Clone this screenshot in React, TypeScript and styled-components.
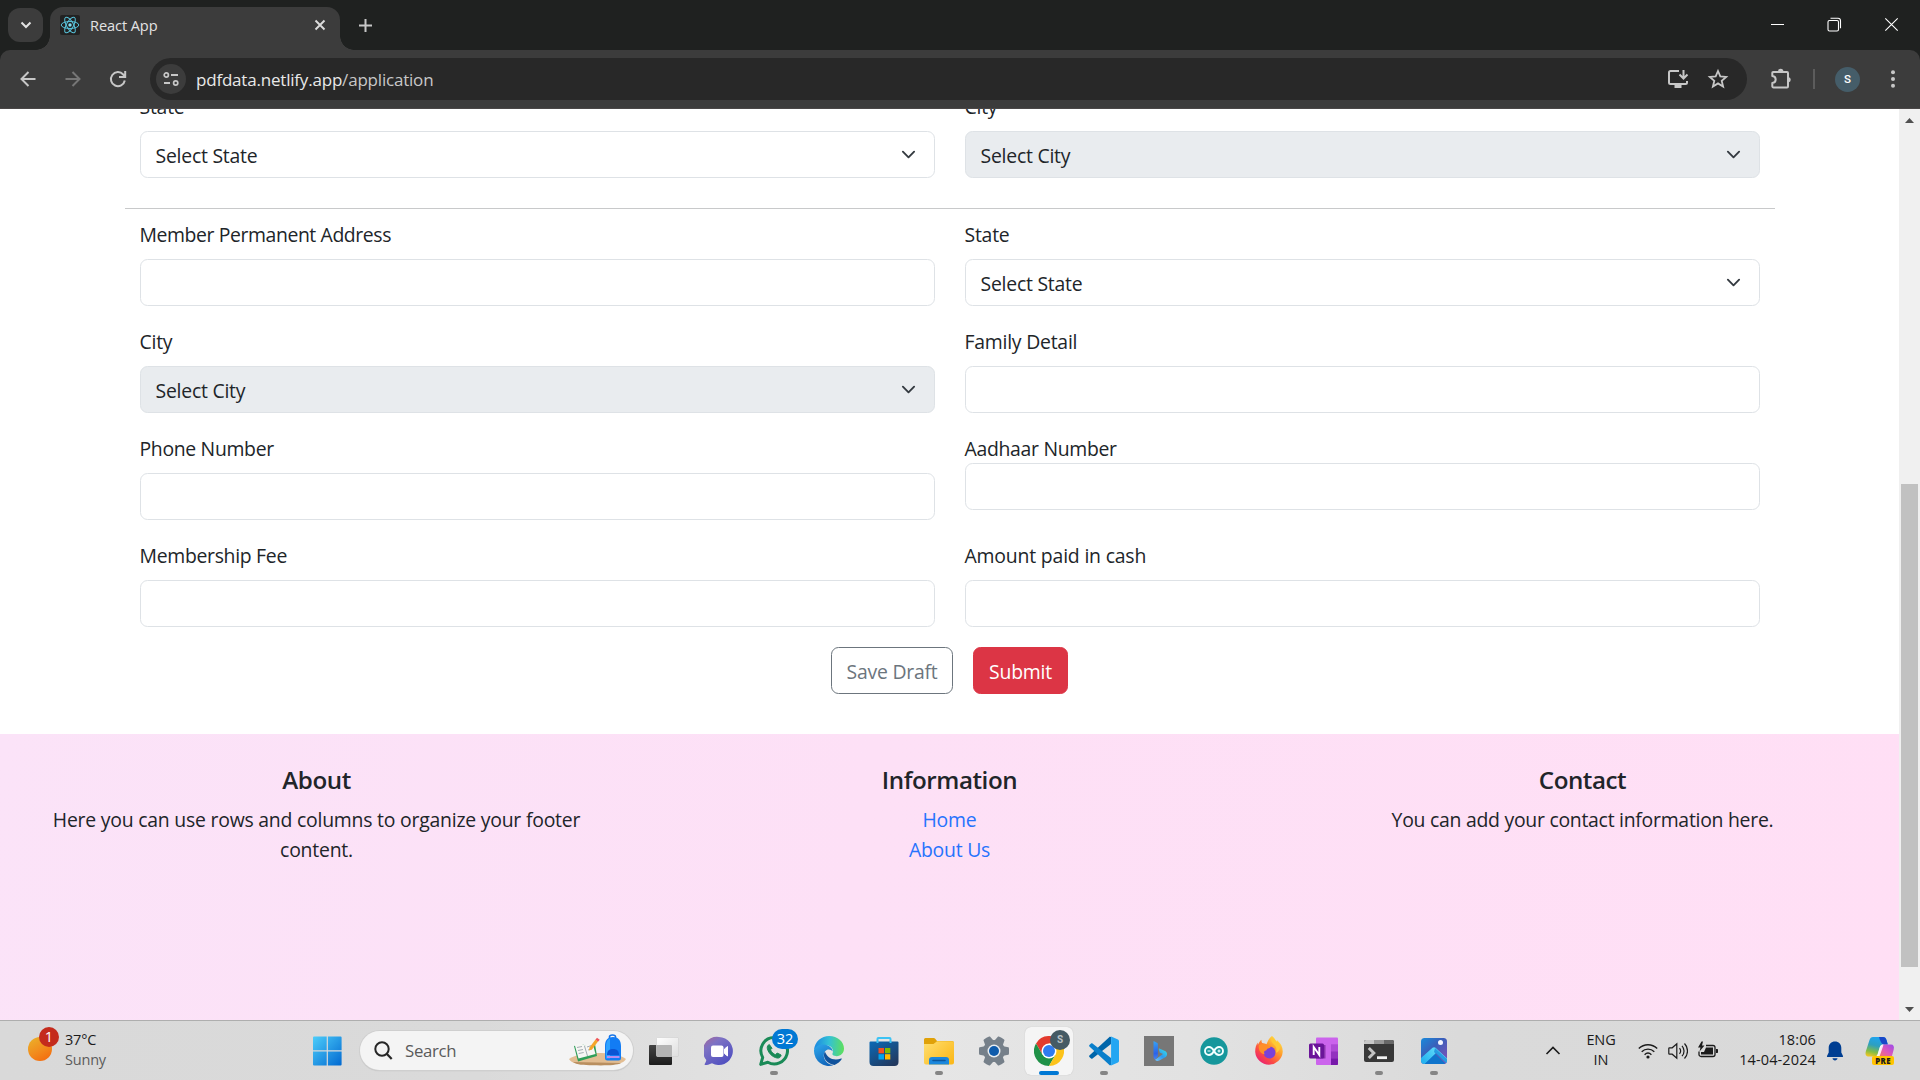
import React from 'react';
import styled, { createGlobalStyle, css } from 'styled-components';

const GlobalStyle = createGlobalStyle`
  *, *::before, *::after { box-sizing: border-box; }
  body { margin: 0; background: #fff; overflow: hidden; }
  #root { font-family: "Open Sans", "Noto Sans", sans-serif; color: #212529; }
`;

const Screen = styled.div`
  width: 1920px;
  height: 1080px;
  display: flex;
  flex-direction: column;
  overflow: hidden;
`;

/* ---------- browser chrome ---------- */

const TabStrip = styled.header`
  height: 50px;
  flex: none;
  display: flex;
  align-items: flex-start;
  background: #1f2120;
  padding-left: 8px;
`;

const TabSearch = styled.button`
  width: 35px;
  height: 34px;
  margin: 8px 7px 0 0;
  padding: 0;
  border: 0;
  border-radius: 12px;
  background: #3c3c3c;
  display: flex;
  align-items: center;
  justify-content: center;
  position: relative;
  z-index: 1;
`;

const Tab = styled.div`
  position: relative;
  width: 290px;
  height: 43px;
  margin-top: 7px;
  padding: 0 12px 7px 10px;
  border-radius: 13px 13px 0 0;
  background: #3c3c3c;
  display: flex;
  align-items: center;
  &::before, &::after {
    content: "";
    position: absolute;
    bottom: 0;
    width: 14px;
    height: 14px;
  }
  &::before {
    left: -14px;
    background: radial-gradient(circle at 0 0, transparent 13.5px, #3c3c3c 14px);
  }
  &::after {
    right: -14px;
    background: radial-gradient(circle at 100% 0, transparent 13.5px, #3c3c3c 14px);
  }
`;

const Favicon = styled.span`
  width: 20px;
  height: 20px;
  border-radius: 2px;
  background: #222;
  display: flex;
`;

const TabTitle = styled.span`
  flex: 1;
  padding-left: 10px;
  font-size: 14.6px;
  line-height: 20px;
  letter-spacing: -0.1px;
  color: #e3e3e3;
`;

const GlyphButton = styled.span<{ $w: number; $shift?: number }>`
  width: ${(p) => p.$w}px;
  height: 100%;
  flex: none;
  padding-left: ${(p) => p.$shift ?? 0}px;
  display: flex;
  align-items: center;
  justify-content: center;
`;

const NewTab = styled.span`
  width: 51px;
  height: 50px;
  display: flex;
  align-items: center;
  justify-content: center;
`;

const WindowControls = styled.div`
  height: 49px;
  margin-left: auto;
  display: flex;
`;

const ToolbarBack = styled.div`
  flex: none;
  height: 59px;
  background: #1f2120;
`;

const Toolbar = styled.div`
  height: 59px;
  border-radius: 10px 10px 0 0;
  border-bottom: 1px solid #4a4747;
  background: #3c3c3c;
  display: flex;
  align-items: center;
  padding-left: 5px;
`;

const Omnibox = styled.div`
  flex: none;
  width: 1597px;
  height: 42px;
  margin-left: 10px;
  border-radius: 21px;
  background: #282828;
  display: flex;
  align-items: center;
  padding: 0 9px 0 6px;
`;

const SiteInfo = styled.span`
  width: 30px;
  height: 30px;
  border-radius: 50%;
  background: #3c3c3c;
  display: flex;
  align-items: center;
  justify-content: center;
`;

const Address = styled.span`
  flex: 1;
  padding: 1px 0 0 10px;
  font-size: 17px;
  letter-spacing: -0.2px;
  line-height: 24px;
  color: #e8e8e8;
`;

const AddressPath = styled.span`
  color: #c7c7c7;
`;

const Divider = styled.span`
  flex: none;
  width: 2px;
  height: 20px;
  background: #5c5c5c;
  margin-right: 20px;
`;

const Avatar = styled.span`
  flex: none;
  width: 25px;
  height: 25px;
  border-radius: 50%;
  background: #455d69;
  color: #fff;
  font: 500 11.5px/25px Roboto, sans-serif;
  text-align: center;
`;

/* ---------- page ---------- */

const Viewport = styled.div`
  height: 911px;
  flex: none;
  display: flex;
  overflow: hidden;
`;

const Page = styled.main`
  flex: 1;
  overflow: hidden;
  display: flex;
  flex-direction: column;
`;

const bodyText = css`
  font-size: 19.4px;
  line-height: 30px;
  letter-spacing: -0.23px;
`;

const Form = styled.div`
  width: 1650px;
  margin: -18px auto 0;
  ${bodyText}
`;

const Row = styled.div`
  display: grid;
  grid-template-columns: 1fr 1fr;
  column-gap: 30px;
  padding: 0 15px;
`;

const Field = styled.div<{ $tight?: boolean }>`
  height: 107px;
  display: flex;
  flex-direction: column;
  gap: ${(p) => (p.$tight ? 0 : 10)}px;
`;

const Label = styled.label<{ $track?: number }>`
  height: 30px;
  padding-top: 1px;
  letter-spacing: ${(p) => p.$track ?? -0.23}px;
`;

const control = css`
  width: 100%;
  height: 47px;
  flex: none;
  border: 1px solid #dee2e6;
  border-radius: 7.5px;
`;

const Input = styled.input`
  ${control}
  background: #fff;
  padding: 0 15px;
  outline: none;
`;

const Select = styled.div<{ $disabled?: boolean }>`
  ${control}
  background: ${(p) => (p.$disabled ? '#e9ecef' : '#fff')};
  padding: 2px 18px 0 15px;
  display: flex;
  align-items: center;
  justify-content: space-between;
  & > svg { margin-top: -2px; }
`;

const Rule = styled.hr`
  height: 1px;
  margin: 10px 0;
  border: 0;
  background: #c8c9ca;
`;

const Actions = styled.div`
  display: flex;
  justify-content: center;
  gap: 20px;
  padding-bottom: 40px;
`;

const Button = styled.button<{ $solid?: boolean }>`
  width: ${(p) => (p.$solid ? 95 : 122)}px;
  height: 47px;
  padding: 2px 0 0;
  border: 1px solid ${(p) => (p.$solid ? '#dc3545' : '#6c757d')};
  border-radius: 7.5px;
  background: ${(p) => (p.$solid ? '#dc3545' : '#fff')};
  color: ${(p) => (p.$solid ? '#fff' : '#6c757d')};
  font-family: inherit;
  font-weight: ${(p) => (p.$solid ? 500 : 400)};
  ${bodyText}
`;

const Footer = styled.footer`
  flex: 1;
  background: linear-gradient(100deg, #fbe3f8 0%, #fde0f6 45%, #ffdff5 100%);
  display: grid;
  grid-template-columns: repeat(3, 1fr);
  padding-top: 31px;
  text-align: center;
`;

const FooterColumn = styled.section`
  padding: 0 50px;
  ${bodyText}
`;

const FooterTitle = styled.h5`
  margin: 0 0 10px;
  font-size: 24.2px;
  font-weight: 600;
  line-height: 30px;
  letter-spacing: -0.45px;
`;

const FooterText = styled.p<{ $track?: number }>`
  margin: 0;
  letter-spacing: ${(p) => p.$track ?? -0.22}px;
`;

const FooterLink = styled.a`
  display: block;
  color: #2673fd;
`;

const Scrollbar = styled.div`
  width: 21px;
  background: #f0f0f0;
  display: flex;
  flex-direction: column;
  align-items: center;
  justify-content: space-between;
  padding: 9px 0 8px;
`;

const Track = styled.div`
  flex: 1;
  width: 17px;
  padding-top: 361px;
`;

const Thumb = styled.div`
  height: 483px;
  background: #c1c1c1;
`;

/* ---------- taskbar ---------- */

const Taskbar = styled.footer`
  height: 60px;
  flex: none;
  border-top: 1px solid #aeaeae;
  background: linear-gradient(90deg, #d9d9d9 0%, #dadada 25%, #e6e6e6 48%, #e2e2e2 62%, #dadada 76%, #d9d9d9 100%);
  display: flex;
  align-items: center;
  color: #1b1b1b;
`;

const Weather = styled.div`
  width: 303px;
  height: 59px;
  padding-left: 28px;
  display: flex;
  align-items: center;
`;

const WeatherIcon = styled.span`
  position: relative;
  width: 37px;
  height: 24px;
  margin-top: -3px;
`;

const Sun = styled.span`
  display: block;
  width: 24px;
  height: 24px;
  border-radius: 50%;
  background: linear-gradient(150deg, #e9b52c, #f28a1c 55%, #f4640c);
`;

const Badge = styled.span<{ $left: number; $top: number; $w: number; $bg: string }>`
  position: absolute;
  left: ${(p) => p.$left}px;
  top: ${(p) => p.$top}px;
  width: ${(p) => p.$w}px;
  height: 20px;
  border-radius: 10px;
  background: ${(p) => p.$bg};
  color: #fff;
  font-size: 14.5px;
  line-height: 19px;
  text-align: center;
`;

const InitialBadge = styled(Badge)`
  font: 700 10px/20px Roboto, sans-serif;
  color: #b9c1c5;
`;

const SmallText = styled.div<{ $align?: string; $w?: number; $track?: number }>`
  font-size: 14.5px;
  line-height: 20px;
  letter-spacing: ${(p) => p.$track ?? 0}px;
  text-align: ${(p) => p.$align ?? 'left'};
  width: ${(p) => (p.$w ? `${p.$w}px` : 'auto')};
  padding-bottom: 2px;
`;

const Muted = styled.div`
  color: #5c5c5c;
  letter-spacing: -0.2px;
`;

const Apps = styled.nav`
  display: flex;
  align-items: center;
  gap: 7px;
`;

const Slot = styled.span<{ $active?: boolean }>`
  position: relative;
  width: 48px;
  height: 48px;
  padding-top: 9px;
  border-radius: 6px;
  background: ${(p) => (p.$active ? '#f5f5f5' : 'transparent')};
  box-shadow: ${(p) => (p.$active ? '0 0 1px #b5b5b5' : 'none')};
  display: flex;
  flex-direction: column;
  align-items: center;
  gap: 5px;
`;

const Running = styled.span<{ $active?: boolean }>`
  width: ${(p) => (p.$active ? 20 : 8)}px;
  height: 4px;
  border-radius: 2px;
  background: ${(p) => (p.$active ? '#0078d4' : '#858585')};
`;

const SearchBox = styled.div`
  width: 273px;
  height: 39px;
  margin-left: 2px;
  border-radius: 20px;
  background: #f4f4f4;
  box-shadow: 0 0 0 1px #cfcfcf, 0 1px 1px #a8a8a8;
  display: flex;
  align-items: center;
  padding: 0 7px 0 14px;
`;

const SearchLabel = styled.span`
  flex: 1;
  padding: 0 0 1px 12px;
  font-size: 16.8px;
  letter-spacing: -0.3px;
  color: #5a5a5a;
`;

const Tray = styled.div`
  margin-left: auto;
  height: 59px;
  display: flex;
  align-items: center;
  padding-right: 14px;
`;

const Overflow = styled.span`
  display: flex;
  margin-right: 4px;
`;

const TrayIcons = styled.div`
  display: flex;
  align-items: center;
  gap: 10px;
  margin-left: 1px;
`;

/* ---------- icons ---------- */

const svgProps = { fill: 'none', xmlns: 'http://www.w3.org/2000/svg' };

const SelectArrow = () => (
  <svg {...svgProps} width="15" height="15" viewBox="0 0 16 16">
    <path d="m2 5 6 6 6-6" stroke="#343a40" strokeWidth="2" strokeLinecap="round" strokeLinejoin="round" />
  </svg>
);

const ReactMark = () => (
  <svg {...svgProps} width="20" height="20" viewBox="-10 -10 20 20" stroke="#58c4dc" strokeWidth="1">
    {[0, 60, 120].map((a) => (
      <ellipse key={a} rx="8.8" ry="3.5" transform={`rotate(${a})`} />
    ))}
    <circle r="1.7" fill="#7fdcf0" stroke="none" />
  </svg>
);

const ToolIcon = ({ children, size = 20, color = '#c7c7c7' }: { children: React.ReactNode; size?: number; color?: string }) => (
  <svg {...svgProps} width={size} height={size} viewBox={`0 0 ${size} ${size}`} stroke={color} strokeWidth="2">
    {children}
  </svg>
);

const AppIcon = ({ children }: { children: React.ReactNode }) => (
  <svg {...svgProps} width="30" height="30" viewBox="0 0 30 30">
    {children}
  </svg>
);

const WindowsLogo = () => (
  <AppIcon>
    <defs>
      <linearGradient id="win" x1="0" y1="0" x2="30" y2="30" gradientUnits="userSpaceOnUse">
        <stop stopColor="#4fd0fb" />
        <stop offset="1" stopColor="#0067d0" />
      </linearGradient>
    </defs>
    <path fill="url(#win)" d="M2 .5h12.700v13.700H1V1.500a1 1 0 0 1 1-1zM15.900.5h12.700a1 1 0 0 1 1 1v12.700H15.900zM1 15.600h13.700v13.900H2a1 1 0 0 1-1-1zM15.900 15.600h13.700v12.900a1 1 0 0 1-1 1H15.900z" />
  </AppIcon>
);

const TaskView = () => (
  <AppIcon>
    <defs>
      <linearGradient id="tv" x1="0" y1="0" x2="0" y2="1">
        <stop stopColor="#444" /><stop offset="1" stopColor="#1c1c1c" />
      </linearGradient>
      <linearGradient id="tv2" x1="0" y1="0" x2="1" y2="1">
        <stop stopColor="#fff" /><stop offset="1" stopColor="#dedede" />
      </linearGradient>
    </defs>
    <rect x="0" y="9" width="23" height="20" rx="1" fill="url(#tv)" />
    <rect x="7.5" y="1.5" width="22" height="19" rx="1" fill="url(#tv2)" stroke="#cfcfcf" strokeWidth=".6" />
    <path d="M8 9h14a1 1 0 0 1 1 1v10.500H8z" fill="#b4b4b4" />
  </AppIcon>
);

const Chat = () => (
  <AppIcon>
    <defs>
      <linearGradient id="chat" x1="4" y1="2" x2="22" y2="28" gradientUnits="userSpaceOnUse">
        <stop stopColor="#9a6aa6" /><stop offset=".25" stopColor="#7d72c4" /><stop offset="1" stopColor="#4f4fc0" />
      </linearGradient>
    </defs>
    <path d="M15 1a14 14 0 1 1-7 26.200C5 28.500 3 29 1.200 29c-.7 0-.8-.5-.5-1 1-1.800 1.500-3 1.600-4A14 14 0 0 1 15 1z" fill="url(#chat)" />
    <rect x="7" y="9.500" width="12.500" height="11.500" rx="2" fill="#fff" />
    <path d="m20.500 13 3-2.500v9.500l-3-2.500z" fill="#fff" stroke="#fff" strokeLinejoin="round" />
  </AppIcon>
);

const WhatsApp = () => (
  <AppIcon>
    <path d="M15.400 1.600A13.200 13.200 0 1 1 8.800 26.300L1.700 28.400l2-7A13.200 13.200 0 0 1 15.400 1.600z" stroke="#1a8a57" strokeWidth="3" strokeLinejoin="round" />
    <path d="M10.300 8.500c-1.600.6-2.400 2.200-1.900 4.300 1.200 4.700 5.300 8.400 9.700 9.200 2.100.4 3.800-.8 4-3l-3.900-2-1.700 1.800c-2.200-.9-4-2.700-5-5l1.500-1.500z" fill="#1a8a57" stroke="#1a8a57" strokeLinejoin="round" />
  </AppIcon>
);

const Edge = () => (
  <AppIcon>
    <defs>
      <linearGradient id="edgeTop" x1="2" y1="12" x2="30" y2="14" gradientUnits="userSpaceOnUse">
        <stop stopColor="#1f8fe0" /><stop offset=".45" stopColor="#33c1d6" /><stop offset="1" stopColor="#5fe05a" />
      </linearGradient>
      <linearGradient id="edgeLow" x1="4" y1="10" x2="14" y2="30" gradientUnits="userSpaceOnUse">
        <stop stopColor="#2a9fe6" /><stop offset="1" stopColor="#0f62b8" />
      </linearGradient>
    </defs>
    <path d="M0 14C.8 5.500 7.500 0 15.200 0 23.500 0 30 5.800 30 12.600c0 4.700-3.400 7.600-7.300 7.600-2.800 0-4.800-1.200-4.200-2.600 1.800-3.600-.8-8.200-6-8.400C6.500 9 2 11 0 14z" fill="url(#edgeTop)" />
    <path d="M0 14c1.500-3.700 5.500-5.800 9.800-5.500 4.800.3 8.600 3.200 8.900 6.900-1.600-2.200-5.600-3-7.800.2-3.200 5 .6 12.800 8.400 13.700A15 15 0 0 1 0 15z" fill="url(#edgeLow)" />
    <path d="M10.900 15.600C8 21 12 28 20.500 28.900c3.200-1.100 5.800-3.200 7.300-5.800.3-.6-.2-.9-.7-.6-7.600 3.300-14.400-1.200-16.200-6.900z" fill="#10529c" />
  </AppIcon>
);

const Store = () => (
  <AppIcon>
    <defs>
      <linearGradient id="store" x1="6" y1="5" x2="22" y2="30" gradientUnits="userSpaceOnUse">
        <stop stopColor="#0c66b0" /><stop offset="1" stopColor="#22395f" />
      </linearGradient>
    </defs>
    <path d="M.5 6.500a1 1 0 0 1 1-1h27a1 1 0 0 1 1 1V26a4 4 0 0 1-4 4h-21a4 4 0 0 1-4-4z" fill="url(#store)" />
    <path d="M8.500 7V2.900c0-.5.400-.9.900-.9h11.200c.5 0 .9.400.9.900V7" stroke="#3cc3f4" strokeWidth="2" />
    <path d="M9.500 12H15v5.300H9.500z" fill="#f25022" /><path d="M16 12h5.300v5.300H16z" fill="#7fba00" />
    <path d="M9.500 18.200H15v5.300H9.500z" fill="#00a4ef" /><path d="M16 18.200h5.300v5.300H16z" fill="#ffb900" />
  </AppIcon>
);

const Explorer = () => (
  <AppIcon>
    <defs>
      <linearGradient id="fold" x1="0" y1="5" x2="24" y2="30" gradientUnits="userSpaceOnUse">
        <stop stopColor="#ffdf70" /><stop offset="1" stopColor="#fbb91c" />
      </linearGradient>
    </defs>
    <path d="M0 3.500a1.500 1.500 0 0 1 1.500-1.500h8.300c.5 0 .9.200 1.200.5L13 5h15a2 2 0 0 1 2 2v3H0z" fill="#e0a108" />
    <path d="M0 8h9.500L13 5.200h15.500A1.500 1.500 0 0 1 30 6.700V26.500a2 2 0 0 1-2 2H2a2 2 0 0 1-2-2z" fill="url(#fold)" />
    <path d="M5 28.500V24a3 3 0 0 1 3-3h14a3 3 0 0 1 3 3v4.500z" fill="#1b87dc" />
    <path d="M9 24.500h12" stroke="#0c569c" strokeWidth="1.500" strokeLinecap="round" />
  </AppIcon>
);

const Settings = () => (
  <AppIcon>
    <g fill="#76808a">
      {[30, 90, 150, 210, 270, 330].map((a) => (
        <path key={a} d="M10 7 11.200.7c.1-.4.400-.6.800-.6 2-.2 4-.2 6 0 .4 0 .7.200.8.600L20 7z" transform={`rotate(${a} 15 15)`} />
      ))}
      <circle cx="15" cy="15" r="11" />
    </g>
    <circle cx="15" cy="15" r="6.500" fill="#e9edf1" />
    <circle cx="15" cy="15" r="5" fill="#0e5bab" />
  </AppIcon>
);

const Chrome = () => (
  <AppIcon>
    <path d="M2 7.500A15 15 0 0 1 28 7.500H15L8.500 18.700z" fill="#e33b2e" />
    <path d="M2 7.500A15 15 0 0 0 15 30l6.500-11.200L15 15 8.500 18.700z" fill="#1f9147" />
    <path d="M28 7.500A15 15 0 0 1 15 30l6.500-11.200L15 7.500z" fill="#fcc31a" />
    <circle cx="15" cy="15" r="7.500" fill="#fff" />
    <circle cx="15" cy="15" r="6" fill="#2f7bf0" />
  </AppIcon>
);

const VSCode = () => (
  <AppIcon>
    <path d="m22 8-18.500 14.500c-.4.300-1 .3-1.400 0L.4 21c-.4-.3-.4-1 0-1.400L20.700.700 22 1z" fill="#0065a9" />
    <path d="M22 22 3.500 7.500c-.4-.3-1-.3-1.400 0L.4 9c-.4.300-.4 1 0 1.400l20.300 18.900L22 29z" fill="#0a7fcb" />
    <path d="M21.500.2 29 3.500c.6.300 1 .9 1 1.500v20c0 .6-.4 1.200-1 1.500l-7.500 3.300c-.6.200-1 .1-1.300-.3.900.9 1.900.3 1.900-1V1.500c0-1.300-1-1.900-1.900-1 .3-.4.700-.5 1.300-.3z" fill="#23a6f2" />
  </AppIcon>
);

const Bing = () => (
  <AppIcon>
    <defs>
      <linearGradient id="bing" x1="10" y1="6" x2="13" y2="25" gradientUnits="userSpaceOnUse">
        <stop stopColor="#35a0f4" /><stop offset=".6" stopColor="#2b62ea" /><stop offset="1" stopColor="#4a8ff4" />
      </linearGradient>
      <linearGradient id="bing2" x1="22" y1="14" x2="12" y2="25" gradientUnits="userSpaceOnUse">
        <stop stopColor="#37d8e6" /><stop offset=".5" stopColor="#2d9bf0" /><stop offset="1" stopColor="#6fc0fa" />
      </linearGradient>
    </defs>
    <rect width="30" height="30" fill="#777" />
    <path d="m9.500 5 3.500 1.800c.6.300.9.800.9 1.500v12L11 23.500c-1-.7-1.500-1.600-1.500-3z" fill="url(#bing)" />
    <path d="M11 23.800 19 18l-3.300-1.600-1-3.400c0-.5.300-.7.700-.5l5.600 2.600c2.500 1.300 2.700 4.300.8 5.900l-6.500 3.600c-1.600.9-3.200.5-4.300-.8z" fill="url(#bing2)" />
  </AppIcon>
);

const Arduino = () => (
  <AppIcon>
    <circle cx="15" cy="15" r="13.700" fill="#16979c" />
    <path d="M15 15c-1.500-2.800-3-4-5-4a4 4 0 0 0 0 8c2 0 3.500-1.200 5-4zm0 0c1.500-2.800 3-4 5-4a4 4 0 0 1 0 8c-2 0-3.500-1.200-5-4z" stroke="#f3ffff" strokeWidth="1.900" />
    <path d="M8.500 15h3M18.500 15h3M20 13.500v3" stroke="#f3ffff" strokeWidth="1.100" />
  </AppIcon>
);

const Firefox = () => (
  <AppIcon>
    <defs>
      <linearGradient id="fox" x1="25" y1="3" x2="5" y2="27" gradientUnits="userSpaceOnUse">
        <stop stopColor="#ffe14a" /><stop offset=".35" stopColor="#ff9a2a" /><stop offset=".7" stopColor="#fb4a45" /><stop offset="1" stopColor="#e81d78" />
      </linearGradient>
    </defs>
    <path d="M18 0c2.300 1.500 3.600 3.600 4.200 6 .5-.5.700-1.200.6-2 4.100 3.100 6.200 7.500 5.900 12A13.800 13.800 0 0 1 1.200 16c-.1-4.300 1-7.500 2.600-9.500v2.400C5 6.500 6.300 4.500 7.500 3.800c-.1 1.200 0 2.400.6 3.200 2 .1 3.300.5 4.400 1.300C13.800 5 14.800 2 18 0z" fill="url(#fox)" />
    <circle cx="15.500" cy="16.500" r="6" fill="#7a41d8" />
    <path d="M5 9c2.500-1.500 6-1 8 .5l4 .7c-.3 1.300-1.300 1.800-3.200 2.300-1.200.7-.8 2-2.800 2.300-1 .5-1.300 2-.3 3.400C6 18 4 13 5 9z" fill="#ff8f28" />
    <path d="M18 1c-2.500 4 1 6.300 3.300 9 1.500 2 1.500 5 .4 6.800 2.300-.4 4-2.500 4.300-5C26.500 7 21 5 18 1z" fill="#ffc933" />
  </AppIcon>
);

const OneNote = () => (
  <AppIcon>
    <path d="M7 2.500a1 1 0 0 1 1-1h20a1 1 0 0 1 1 1V28a1 1 0 0 1-1 1H8a1 1 0 0 1-1-1z" fill="#cb64ec" />
    <path d="M22 8.300h7v7h-7z" fill="#ae4bd5" /><path d="M22 15.300h7v7h-7z" fill="#9332bf" />
    <path d="M22 22.300h7V28a1 1 0 0 1-1 1h-6z" fill="#7719aa" />
    <path d="M7 22.500h9.500V9H7z" fill="#8a35ad" />
    <rect x="0" y="7.500" width="15" height="15" rx="1.500" fill="#6b1499" />
    <path d="M4.700 19v-8l5.600 8v-8" stroke="#fff" strokeWidth="1.900" />
  </AppIcon>
);

const Terminal = () => (
  <AppIcon>
    <path d="M0 6a2 2 0 0 1 2-2h26a2 2 0 0 1 2 2v18a2 2 0 0 1-2 2H2a2 2 0 0 1-2-2z" fill="#383838" />
    <path d="M0 8V6a2 2 0 0 1 2-2h8v4z" fill="#c8c8c8" /><path d="M10 4h10v4H10z" fill="#989898" /><path d="M20 4h8a2 2 0 0 1 2 2v2H20z" fill="#686868" />
    <path d="m4.800 12 5 5-5 5" stroke="#c4c4c4" strokeWidth="3" />
    <path d="M13 21.700h10" stroke="#f4f4f4" strokeWidth="2.800" />
  </AppIcon>
);

const Photos = () => (
  <AppIcon>
    <defs>
      <linearGradient id="ph" x1="4" y1="2" x2="28" y2="28" gradientUnits="userSpaceOnUse">
        <stop stopColor="#1c87d8" /><stop offset=".4" stopColor="#3a5fba" /><stop offset="1" stopColor="#8a4fb8" />
      </linearGradient>
      <linearGradient id="ph2" x1="4" y1="24" x2="18" y2="12" gradientUnits="userSpaceOnUse">
        <stop stopColor="#27b4f0" /><stop offset="1" stopColor="#62dcfa" />
      </linearGradient>
      <clipPath id="phc"><rect x="2" y="2" width="26" height="26" rx="3.500" /></clipPath>
    </defs>
    <g clipPath="url(#phc)">
      <path d="M2 2h26v26H2z" fill="url(#ph)" />
      <path d="M5 28 15.500 17.500 28 29z" fill="#0f74cc" />
      <path d="M2 22 13.500 11.800c.9-.8 2.100-.8 3 0L28 22.500v5L17 17 5 28.500H2z" fill="url(#ph2)" />
      <path d="m16 12 12 11v5L15 16z" fill="#1487da" opacity=".75" />
    </g>
    <circle cx="21.500" cy="6.500" r="2.500" fill="#f2f4ff" />
  </AppIcon>
);

const SearchArt = () => (
  <svg {...svgProps} width="57" height="33" viewBox="0 0 57 33">
    <path d="M0 25c8-5 17-6 28-6 12 0 23 1.500 29 6-1 2-4 4-8 5H9c-5-1-8-3-9-5z" fill="#e2bd92" />
    <path d="M4 28c4 3 10 3 20 3.300 12 .2 24 .200 28-2.300z" fill="#b98f60" />
    <path d="m5 12 8-2 4 2 9-2 2 12-19 5.500z" fill="#2f9e58" />
    <path d="m5.500 10 7-.5 3.500 2 7.500-2.500 3 11-17 4.500z" fill="#f6f6f4" />
    <path d="m15.500 12 3 10M8 13.500l5-1M9 16.500l5-1M9.700 19.500l5-1M18 13l4.500-1.500M19 16l4-1.200" stroke="#9aa5aa" strokeWidth=".9" />
    <path d="m20.500 13.500 6-8 2.500 2-6 8-3 1z" fill="#f5a52a" /><path d="m26.500 5.500 1.500-1.700 2.700 2-1.700 1.900z" fill="#ef5558" />
    <path d="M40.500 4.500V2.800c0-1.200 1-1.800 3-1.800s3 .600 3 1.800v1.700" stroke="#1573e8" strokeWidth="1.600" />
    <path d="M36 12c0-6 3-9 8-9s8 3 8 9v12a2.500 2.500 0 0 1-2.500 2.500h-11A2.500 2.500 0 0 1 36 24z" fill="#127cf4" />
    <path d="M37 13c0-5 1.500-7.500 4-8.500v20H37z" fill="#2da2ff" />
    <path d="M38 21c0-4 2-6 6-6s6 2 6 6z" fill="#0b54d4" /><path d="M38 22h12.500v2H38z" fill="#b58cf0" />
  </svg>
);

const Copilot = () => (
  <svg {...svgProps} width="30" height="30" viewBox="0 0 30 30">
    <defs>
      <linearGradient id="cp1" x1="9" y1="1" x2="4" y2="20" gradientUnits="userSpaceOnUse">
        <stop stopColor="#1fa4ec" /><stop offset=".4" stopColor="#2d9fc0" /><stop offset=".75" stopColor="#83bd45" /><stop offset="1" stopColor="#edc524" />
      </linearGradient>
      <linearGradient id="cp2" x1="27" y1="8" x2="15" y2="24" gradientUnits="userSpaceOnUse">
        <stop stopColor="#a04be8" /><stop offset=".5" stopColor="#e25ab5" /><stop offset="1" stopColor="#f7824a" />
      </linearGradient>
    </defs>
    <path d="M8 1h10c2 0 2.800 1 3.500 3l1.300 4.500h-4.300c-2 0-3.200 1-3.800 3l-2 6.500c-.6 2-1.800 2.500-3.700 2.500H4C1 20.500 0 18.500.8 15.500L4.500 4C5.200 2 6.200 1 8 1z" fill="url(#cp1)" />
    <path d="M14 1h4c2 0 2.800 1 3.500 3l1.300 4.500h-4.300C16.500 8 15 5 14 1z" fill="#1848c8" />
    <path d="M18.500 8.500H26c2.500 0 3.500 2 2.700 5l-2 7.500H11.500c1.200-.3 2-1.200 2.500-3l2-6.500c.5-1.800 1-3 2.500-3z" fill="url(#cp2)" />
    <path d="M18.500 8.500h-1c-1.400.3-2.300 1.200-2.800 3l-2 6.500c-.4 1.400-1.100 2.300-2.200 2.500h4l3.500-10z" fill="#fff" opacity=".85" />
    <rect x="7" y="20" width="22" height="9" rx="2" fill="#ffc400" />
    <text x="18" y="27.700" textAnchor="middle" fontFamily="Open Sans, sans-serif" fontSize="7.800" fontWeight="800" letterSpacing=".4" fill="#1b1b1b">PRE</text>
  </svg>
);

const tasks: { icon: React.ReactNode; running?: boolean; active?: boolean; badge?: React.ReactNode }[] = [
  { icon: <TaskView /> },
  { icon: <Chat /> },
  { icon: <WhatsApp />, running: true, badge: <Badge $left={22} $top={2} $w={26} $bg="#0078d4">32</Badge> },
  { icon: <Edge /> },
  { icon: <Store /> },
  { icon: <Explorer />, running: true },
  { icon: <Settings /> },
  { icon: <Chrome />, running: true, active: true, badge: <InitialBadge $left={25} $top={3} $w={20} $bg="#455a64">S</InitialBadge> },
  { icon: <VSCode />, running: true },
  { icon: <Bing /> },
  { icon: <Arduino /> },
  { icon: <Firefox /> },
  { icon: <OneNote /> },
  { icon: <Terminal />, running: true },
  { icon: <Photos />, running: true },
];

type FieldSpec = { label: string; select?: string; disabled?: boolean; tight?: boolean; track?: number };

const FormField = ({ label, select, disabled, tight, track }: FieldSpec) => (
  <Field $tight={tight}>
    <Label $track={track}>{label}</Label>
    {select ? (
      <Select $disabled={disabled}>
        {select}
        <SelectArrow />
      </Select>
    ) : (
      <Input aria-label={label} />
    )}
  </Field>
);

const fields: FieldSpec[] = [
  { label: 'Member Permanent Address', track: -0.4 },
  { label: 'State', select: 'Select State' },
  { label: 'City', select: 'Select City', disabled: true },
  { label: 'Family Detail' },
  { label: 'Phone Number', track: -0.32 },
  { label: 'Aadhaar Number', tight: true, track: -0.3 },
  { label: 'Membership Fee', track: -0.3 },
  { label: 'Amount paid in cash', track: -0.18 },
];

export default function App() {
  return (
    <Screen>
      <GlobalStyle />
      <TabStrip>
        <TabSearch aria-label="Search tabs">
          <ToolIcon size={12} color="#e3e3e3"><path d="m1.500 3.500 4.500 4.500 4.500-4.500" /></ToolIcon>
        </TabSearch>
        <Tab>
          <Favicon><ReactMark /></Favicon>
          <TabTitle>React App</TabTitle>
          <ToolIcon size={16} color="#dcdcdc"><path d="m3.500 3.500 9 9m0-9-9 9" strokeWidth="1.900" /></ToolIcon>
        </Tab>
        <NewTab>
          <ToolIcon size={15} color="#c7c7c7"><path d="M7.500 1v13M1 7.500h13" /></ToolIcon>
        </NewTab>
        <WindowControls>
          <GlyphButton $w={56}>
            <ToolIcon size={15} color="#fff"><path d="M1 7.500h13" strokeWidth="1" /></ToolIcon>
          </GlyphButton>
          <GlyphButton $w={58}>
            <ToolIcon size={15} color="#fff">
              <rect x="1" y="3.500" width="10.500" height="10.500" rx="1.500" strokeWidth="1.100" />
              <path d="M3.500 1.300H11a2.500 2.500 0 0 1 2.500 2.500v7.500" strokeWidth="1.100" />
            </ToolIcon>
          </GlyphButton>
          <GlyphButton $w={57}>
            <ToolIcon size={15} color="#fff"><path d="m1.300 1.300 12.400 12.400m0-12.400L1.300 13.700" strokeWidth="1.100" /></ToolIcon>
          </GlyphButton>
        </WindowControls>
      </TabStrip>

      <ToolbarBack>
        <Toolbar>
          <GlyphButton $w={45}>
            <ToolIcon><path d="M17.500 10H3.500m7-7-7 7 7 7" /></ToolIcon>
          </GlyphButton>
          <GlyphButton $w={45}>
            <ToolIcon color="#767676"><path d="M2.500 10h14m-7-7 7 7-7 7" /></ToolIcon>
          </GlyphButton>
          <GlyphButton $w={45}>
            <ToolIcon><path d="M16.800 11.500a7 7 0 1 1-1.600-6l2 2.200M17.200 2v6H11" /></ToolIcon>
          </GlyphButton>
          <Omnibox>
            <SiteInfo>
              <ToolIcon size={16}>
                <circle cx="3.300" cy="4" r="2.100" strokeWidth="1.700" /><path d="M8 4h7M1 12h6" strokeWidth="1.900" />
                <circle cx="12.700" cy="12" r="2.100" strokeWidth="1.700" />
              </ToolIcon>
            </SiteInfo>
            <Address>pdfdata.netlify.app<AddressPath>/application</AddressPath></Address>
            <GlyphButton $w={40}>
              <ToolIcon size={22}>
                <path d="M12 3H3.500A1.500 1.500 0 0 0 2 4.500v10A1.500 1.500 0 0 0 3.500 16h15a1.500 1.500 0 0 0 1.500-1.500V13M16.500 2v8m-4-3.500 4 4 4-4" />
                <path d="M7.500 17h7v3h-7z" fill="#c7c7c7" stroke="none" />
              </ToolIcon>
            </GlyphButton>
            <GlyphButton $w={40}>
              <ToolIcon size={22}>
                <path d="m11 3 2.300 5.400 5.900.5-4.500 3.900 1.400 5.700L11 15.400l-5.100 3.100 1.400-5.700-4.500-3.900 5.900-.5z" strokeWidth="1.800" />
              </ToolIcon>
            </GlyphButton>
          </Omnibox>
          <GlyphButton $w={66} $shift={2}>
            <ToolIcon size={22}>
              <path d="M3.100 4H17a1 1 0 0 1 1 1v13.500a1 1 0 0 1-1 1H3.500a1.200 1.200 0 0 1-1.200-1.200V15c4.500-.5 4.500-6.500 0-7V4.800A.8.800 0 0 1 3.100 4z" strokeLinejoin="round" />
              <path d="M8 3.500a2.700 2.700 0 0 1 5.400 0zM18.500 9a2.800 2.800 0 0 1 0 5.500z" fill="#c7c7c7" stroke="none" />
            </ToolIcon>
          </GlyphButton>
          <Divider />
          <Avatar>S</Avatar>
          <GlyphButton $w={60} $shift={5}>
            <ToolIcon size={20}>
              <g fill="#c7c7c7" stroke="none"><circle cx="10" cy="3.200" r="2" /><circle cx="10" cy="10" r="2" /><circle cx="10" cy="16.800" r="2" /></g>
            </ToolIcon>
          </GlyphButton>
        </Toolbar>
      </ToolbarBack>

      <Viewport>
        <Page>
          <Form>
            <Row>
              <FormField label="State" select="Select State" />
              <FormField label="City" select="Select City" disabled />
            </Row>
            <Rule />
            <Row>
              {fields.map((f, i) => <FormField key={i} {...f} />)}
            </Row>
            <Actions>
              <Button>Save Draft</Button>
              <Button $solid>Submit</Button>
            </Actions>
          </Form>
          <Footer>
            <FooterColumn>
              <FooterTitle>About</FooterTitle>
              <FooterText>Here you can use rows and columns to organize your footer content.</FooterText>
            </FooterColumn>
            <FooterColumn>
              <FooterTitle>Information</FooterTitle>
              <FooterLink>Home</FooterLink>
              <FooterLink>About Us</FooterLink>
            </FooterColumn>
            <FooterColumn>
              <FooterTitle>Contact</FooterTitle>
              <FooterText $track={-0.26}>You can add your contact information here.</FooterText>
            </FooterColumn>
          </Footer>
        </Page>
        <Scrollbar>
          <svg {...svgProps} width="9" height="5" viewBox="0 0 9 5"><path d="M0 5 4.500 0 9 5z" fill="#505050" /></svg>
          <Track><Thumb /></Track>
          <svg {...svgProps} width="9" height="5" viewBox="0 0 9 5"><path d="m0 0 4.500 5L9 0z" fill="#505050" /></svg>
        </Scrollbar>
      </Viewport>

      <Taskbar>
        <Weather>
          <WeatherIcon>
            <Sun />
            <Badge $left={11} $top={-10} $w={20} $bg="#c42b1c">1</Badge>
          </WeatherIcon>
          <SmallText $track={-0.2}>
            37°C
            <Muted>Sunny</Muted>
          </SmallText>
        </Weather>
        <Apps>
          <Slot><WindowsLogo /></Slot>
          <SearchBox>
            <ToolIcon size={19} color="#262626">
              <circle cx="8" cy="8" r="6.700" /><path d="m12.700 12.700 5 5.200" strokeWidth="2.200" />
            </ToolIcon>
            <SearchLabel>Search</SearchLabel>
            <SearchArt />
          </SearchBox>
          {tasks.map((t, i) => (
            <Slot key={i} $active={t.active}>
              {t.icon}
              {t.running && <Running $active={t.active} />}
              {t.badge}
            </Slot>
          ))}
        </Apps>
        <Tray>
          <Overflow>
            <ToolIcon size={16} color="#1b1b1b"><path d="m1.500 11 6.500-6.500 6.500 6.500" strokeWidth="1.600" /></ToolIcon>
          </Overflow>
          <SmallText $align="center" $w={72} $track={-0.1}>ENG<br />IN</SmallText>
          <TrayIcons>
            <ToolIcon size={20} color="#1b1b1b">
              <path d="M.8 7.500c5.200-5 13.200-5 18.400 0M3.700 10.700c3.600-3.500 9-3.500 12.600 0M6.600 13.700c2-1.900 4.800-1.900 6.800 0" strokeWidth="1.400" />
              <circle cx="10" cy="16" r="1.600" fill="#1b1b1b" stroke="none" />
            </ToolIcon>
            <ToolIcon size={20} color="#1b1b1b">
              <path d="M.8 7.500v5c0 .4.300.7.700.7h2.700l4.600 3.900V2.900L4.200 6.800H1.500c-.4 0-.7.300-.7.700zM11.500 7.200c1.300 1.600 1.300 4 0 5.600M14 4.800c2.700 3 2.700 7.400 0 10.400M16.500 2.500c4 4.300 4 10.700 0 15" strokeWidth="1.200" />
            </ToolIcon>
            <ToolIcon size={20} color="#1b1b1b">
              <path d="M8 4.500h7a2 2 0 0 1 2 2v7a2 2 0 0 1-2 2H3a2 2 0 0 1-2-2v-3" strokeWidth="1.300" />
              <path d="M8 6.500h7v7H3v-2.500h3zM18 8h1.300a.7.700 0 0 1 .7.700v2.600a.7.700 0 0 1-.7.700H18zM3.500.5 0 6.500h2.500L1.500 10.500 6.500 4.500H4L5 .5z" fill="#1b1b1b" stroke="none" />
            </ToolIcon>
          </TrayIcons>
          <SmallText $align="right" $w={98} $track={0.12}>18:06<br />14-04-2024</SmallText>
          <GlyphButton $w={38}>
            <svg {...svgProps} width="18" height="20" viewBox="0 0 18 20">
              <path d="M9 .5c3.700 0 6.300 2.700 6.300 6.300v4.700L17 15c.2.600-.1 1-.7 1H1.700c-.6 0-.9-.4-.7-1l1.700-3.500V6.800C2.700 3.200 5.300.500 9 .500zM6.500 17.200h5c-.2 1.300-1.200 2.200-2.500 2.200s-2.300-.9-2.500-2.200z" fill="#003e92" />
            </svg>
          </GlyphButton>
          <GlyphButton $w={52}><Copilot /></GlyphButton>
        </Tray>
      </Taskbar>
    </Screen>
  );
}
